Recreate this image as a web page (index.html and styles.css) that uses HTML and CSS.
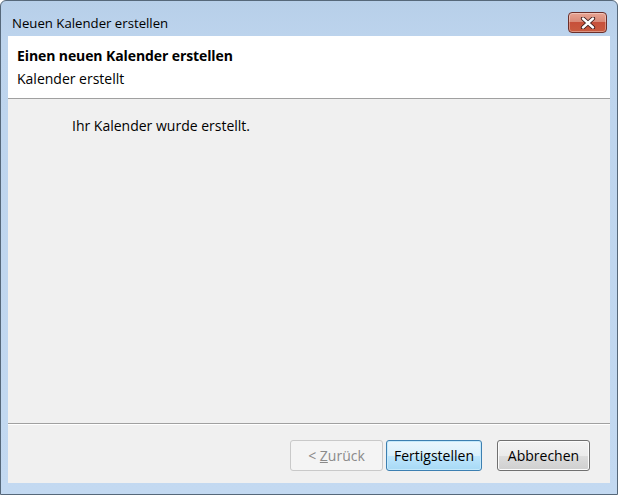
FILE: index.html
```html
<!DOCTYPE html>
<html lang="de">
<head>
<meta charset="utf-8">
<title>Neuen Kalender erstellen</title>
<link rel="stylesheet" href="styles.css">
</head>
<body>
<div class="window">
  <div class="titlebar">
    <span class="title">Neuen Kalender erstellen</span>
    <button class="close" aria-label="Schließen">
      <svg width="16" height="12" viewBox="0 0 16 12">
        <path d="M3 1.5 L13 10.5 M13 1.5 L3 10.5" stroke="#3a1a1a" stroke-width="4.2" stroke-linecap="round"/>
        <path d="M3 1.5 L13 10.5 M13 1.5 L3 10.5" stroke="#ffffff" stroke-width="2.4" stroke-linecap="round"/>
      </svg>
    </button>
  </div>
  <div class="client">
    <div class="header">
      <div class="h-title">Einen neuen Kalender erstellen</div>
      <div class="h-sub">Kalender erstellt</div>
    </div>
    <div class="content">
      <p class="msg">Ihr Kalender wurde erstellt.</p>
    </div>
    <div class="footer">
      <button class="btn disabled">&lt; <u>Z</u>urück</button>
      <button class="btn default">Fertigstellen</button>
      <button class="btn cancel">Abbrechen</button>
    </div>
  </div>
</div>
</body>
</html>
```
FILE: styles.css
```css
* { box-sizing: border-box; }
html, body { margin: 0; padding: 0; background: #ffffff; }
body { font-family: "Open Sans", "Noto Sans", sans-serif; font-size: 14px; color: #000; }

.window {
  width: 618px;
  height: 495px;
  border: 1px solid #56687a;
  border-radius: 6px 6px 0 0;
  background: linear-gradient(to bottom, #b7cfe9 0, #bdd4ed 40px, #c3d9f1 100%);
  display: flex;
  flex-direction: column;
  padding: 0 7px 11px 7px;
}

.titlebar {
  height: 35px;
  flex: 0 0 35px;
  display: flex;
  align-items: flex-start;
  justify-content: space-between;
}
.title {
  margin-left: 4px;
  margin-top: 12px;
  font-size: 13.2px;
  line-height: 20px;
  color: #000;
}
.close {
  margin-top: 11px;
  margin-right: 3px;
  width: 39px;
  height: 21px;
  border: 1px solid #6b2f2a;
  border-radius: 4px;
  padding: 0;
  background: linear-gradient(to bottom, #e8a493 0, #d98a78 45%, #c7503a 50%, #c95b3f 100%);
  display: flex;
  align-items: center;
  justify-content: center;
  box-shadow: inset 0 0 0 1px rgba(255,255,255,0.35);
}

.client {
  flex: 1;
  display: flex;
  flex-direction: column;
  background: #f0f0f0;
}

.header {
  height: 63px;
  background: #ffffff;
  border-bottom: 1px solid #a0a0a0;
  padding: 9px 0 0 9px;
}
.h-title {
  font-weight: bold;
  line-height: 22px;
  letter-spacing: -0.1px;
}
.h-sub {
  line-height: 22px;
  margin-top: 1px;
}

.content {
  flex: 1;
  border-bottom: 1px solid #a0a0a0;
  box-shadow: 0 1px 0 #ffffff;
  padding: 17px 0 0 64px;
}
.msg { margin: 0; line-height: 20px; }

.footer {
  height: 59px;
  display: flex;
  align-items: flex-start;
  justify-content: flex-end;
  padding: 16px 20px 0 0;
}

.btn {
  height: 31px;
  font-family: inherit;
  font-size: 14px;
  padding: 0;
  border-radius: 3px;
  color: #000;
}
.btn.disabled {
  width: 93px;
  border: 1px solid #c9c9c9;
  background: #f4f4f4;
  color: #8a8a8a;
}
.btn.disabled u { text-decoration-thickness: 1px; }
.btn.default {
  width: 96px;
  margin-left: 3px;
  border: 1px solid #3c7fb1;
  background: linear-gradient(to bottom, #eaf6fd 0, #d9f0fc 50%, #bee6fd 51%, #a7d9f5 100%);
  box-shadow: inset 0 0 0 1px #c5e9fb;
}
.btn.cancel {
  width: 93px;
  margin-left: 15px;
  border: 1px solid #707070;
  background: linear-gradient(to bottom, #f2f2f2 0, #ebebeb 50%, #dddddd 51%, #cfcfcf 100%);
  box-shadow: inset 0 0 0 1px #fcfcfc;
}
```
